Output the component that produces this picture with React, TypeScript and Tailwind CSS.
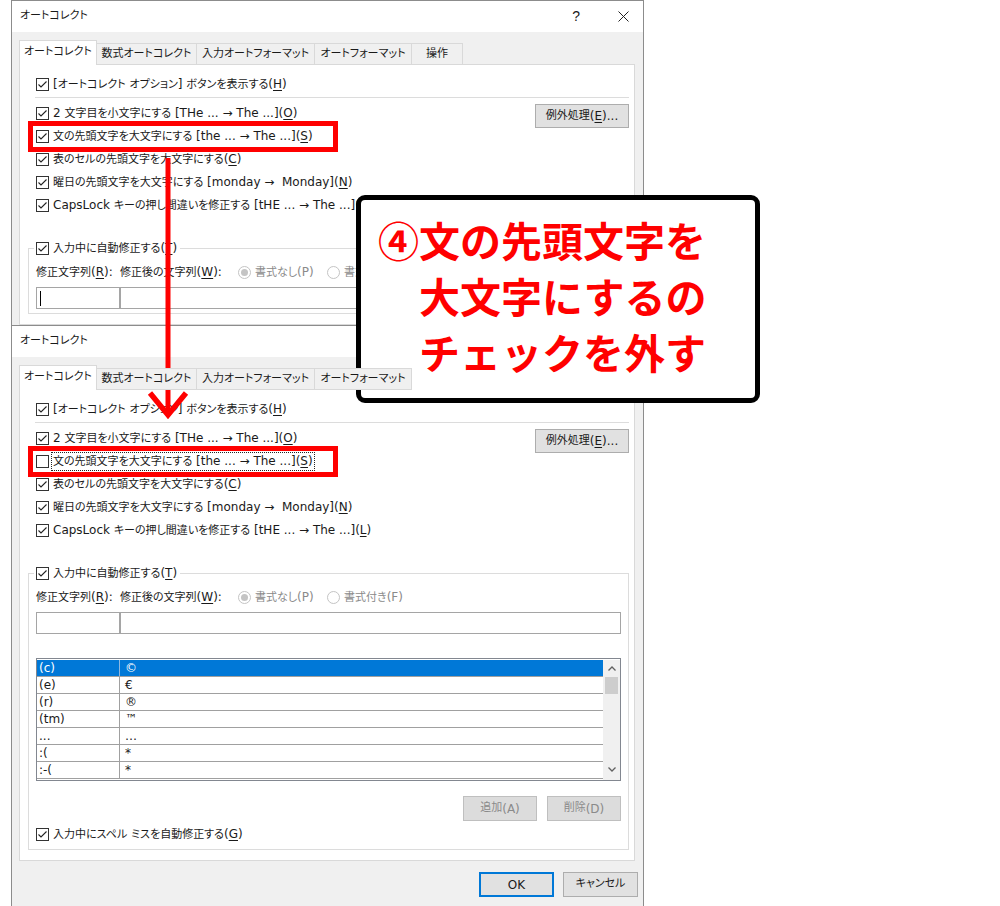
import React from "react";

const ui = "font-['DejaVu_Sans','Noto_Sans_CJK_JP',sans-serif] [font-feature-settings:'palt'] text-[12px] text-[#1a1a1a]";

const tabs = [
  { label: "オートコレクト", w: "w-[78px]" },
  { label: "数式オートコレクト", w: "w-[100px]" },
  { label: "入力オートフォーマット", w: "w-[118px]" },
  { label: "オートフォーマット", w: "w-[97px]" },
  { label: "操作", w: "w-[51px]" },
];

const entries = [
  ["(c)", "©"],
  ["(e)", "€"],
  ["(r)", "®"],
  ["(tm)", "™"],
  ["...", "…"],
  [":(", "*"],
  [":-(", "*"],
];

// Japanese runs get a slightly smaller size than the latin ones (Meiryo UI look);
// "&X" marks an underlined access key.
function Txt({ s }: { s: string }) {
  const parts = s.split(/([\u3000-\u30ff\u4e00-\u9fff\uff00-\uffef]+)/);
  return (
    <>
      {parts.map((p, i) => {
        if (!p) return null;
        if (i % 2 === 1)
          return (
            <span key={i} className="text-[11px]">
              {p}
            </span>
          );
        const segs = p.split(/&(.)/);
        return (
          <React.Fragment key={i}>
            {segs.map((q, j) =>
              j % 2 ? (
                <span key={j} className="underline underline-offset-2">
                  {q}
                </span>
              ) : (
                q
              )
            )}
          </React.Fragment>
        );
      })}
    </>
  );
}

function Check({ on }: { on: boolean }) {
  return (
    <span className="flex h-[13px] w-[13px] shrink-0 items-center justify-center border border-[#333] bg-white">
      {on && (
        <svg width="11" height="11" viewBox="0 0 11 11">
          <path d="M1.5 5.5L4 8l5.5-5.5" fill="none" stroke="#222" strokeWidth="1.1" />
        </svg>
      )}
    </span>
  );
}

function Row({ on, focus, s }: { on: boolean; focus?: boolean; s: string }) {
  return (
    <div className="flex h-[23px] items-center gap-[3px]">
      <Check on={on} />
      <span
        className={
          focus
            ? "whitespace-nowrap px-px leading-[16px] outline-1 outline-dotted outline-[#222]"
            : "whitespace-nowrap px-px leading-[16px]"
        }
      >
        <Txt s={s} />
      </span>
    </div>
  );
}

function Btn({ className, children }: { className: string; children: React.ReactNode }) {
  return <div className={`flex items-center justify-center ${className}`}>{children}</div>;
}

function Radio({ on, s, className }: { on?: boolean; s: string; className?: string }) {
  return (
    <div className={`flex items-center gap-[4px] text-[#8a8a8a] ${className ?? ""}`}>
      <span className="flex h-[13px] w-[13px] items-center justify-center rounded-full border border-[#c4c4c4] bg-white">
        {on && <span className="h-[7px] w-[7px] rounded-full bg-[#c4c4c4]" />}
      </span>
      <span className="whitespace-nowrap">
        <Txt s={s} />
      </span>
    </div>
  );
}

function Panel({ second }: { second?: boolean }) {
  return (
    <div className="border border-[#d9d9d9] bg-white pt-[8px] pb-[10px]">
      <div className="pl-[16px]">
        <Row on s="[オートコレクト オプション] ボタンを表示する(&H)" />
      </div>
      <div className="mt-px ml-[15px] mr-[5px] h-px bg-[#dcdcdc]" />
      <div className="mt-[4px] flex pl-[16px] pr-[5px]">
        <div className="flex-1">
          <Row on s="2 文字目を小文字にする [THe ... → The ...](&O)" />
          <Row on={!second} focus={second} s="文の先頭文字を大文字にする [the ... → The ...](&S)" />
          <Row on s="表のセルの先頭文字を大文字にする(&C)" />
          <Row on s={"曜日の先頭文字を大文字にする [monday →\u00a0 Monday](&N)"} />
          <Row on s="CapsLock キーの押し間違いを修正する [tHE ... → The ...](&L)" />
        </div>
        <Btn className="mt-[2px] h-[24px] w-[94px] border border-[#adadad] bg-[#e1e1e1]">
          <Txt s="例外処理(&E)..." />
        </Btn>
      </div>

      <fieldset className="mt-[23px] ml-[8px] mr-[5px] border border-[#dcdcdc] px-[7px] pb-[4px]">
        <legend className="-ml-[2px] px-[2px]">
          <div className="flex h-[16px] items-center gap-[3px]">
            <Check on />
            <span className="px-px">
              <Txt s="入力中に自動修正する(&T)" />
            </span>
          </div>
        </legend>
        <div className="mt-[7px] flex h-[18px] items-center whitespace-nowrap">
          <span className="w-[84px]">
            <Txt s="修正文字列(&R):" />
          </span>
          <span className="w-[118px]">
            <Txt s="修正後の文字列(&W):" />
          </span>
          <Radio on className="w-[89px]" s="書式なし(P)" />
          <Radio s="書式付き(F)" />
        </div>
        <div className="mt-[6px] flex h-[22px]">
          <div className="flex w-[84px] items-center border border-[#a5a5a5] pl-[3px]">
            {!second && <span className="h-[15px] w-px bg-black" />}
          </div>
          <div className="flex-1 border border-[#a5a5a5]" />
        </div>

        {second && (
          <>
            <div className="mt-[24px] flex h-[123px] border border-[#828790] pt-px">
              <div className="flex-1">
                {entries.map(([a, b], i) => (
                  <div
                    key={a}
                    className={`flex h-[17px] border-b border-[#a0a0a0] leading-[16px] ${
                      i === 0 ? "bg-[#0078d7] text-white" : ""
                    }`}
                  >
                    <span className={`w-[83px] border-r pl-[2px] ${i === 0 ? "border-[#8fb8e0]" : "border-[#a0a0a0]"}`}>
                      {a}
                    </span>
                    <span className="pl-[5px]">{b}</span>
                  </div>
                ))}
              </div>
              <div className="flex w-[17px] flex-col bg-[#f0f0f0]">
                <div className="flex h-[17px] items-center justify-center">
                  <svg width="8" height="5" viewBox="0 0 8 5">
                    <path d="M0.5 4.5L4 1l3.5 3.5" fill="none" stroke="#606060" strokeWidth="1.3" />
                  </svg>
                </div>
                <div className="mx-[2px] h-[17px] bg-[#cdcdcd]" />
                <div className="mt-auto mb-[2px] flex h-[17px] items-center justify-center">
                  <svg width="8" height="5" viewBox="0 0 8 5">
                    <path d="M0.5 0.5L4 4l3.5-3.5" fill="none" stroke="#606060" strokeWidth="1.3" />
                  </svg>
                </div>
              </div>
            </div>

            <div className="mt-[15px] flex justify-end gap-[10px] text-[#8a8a8a]">
              <Btn className="h-[25px] w-[74px] border border-[#bfbfbf] bg-[#dcdcdc]">
                <Txt s="追加(A)" />
              </Btn>
              <Btn className="h-[25px] w-[74px] border border-[#bfbfbf] bg-[#dcdcdc]">
                <Txt s="削除(D)" />
              </Btn>
            </div>
            <div className="mt-[2px] flex h-[22px] items-center gap-[3px]">
              <Check on />
              <span className="px-px">
                <Txt s="入力中にスペル ミスを自動修正する(&G)" />
              </span>
            </div>
          </>
        )}
      </fieldset>
    </div>
  );
}

function Dialog({ second }: { second?: boolean }) {
  // the lower window's title buttons and last tab sit under the callout
  const shown = second ? tabs.slice(0, 4) : tabs;
  return (
    <div className={`flex w-[633px] flex-col border border-[#8c8c8c] bg-[#f0f0f0] ${ui}`}>
      <div className="flex h-[31px] items-center bg-white pl-[8px] pr-[14px]">
        <Txt s="オートコレクト" />
        {!second && (
          <>
            <span className="ml-auto font-['Liberation_Sans',sans-serif] text-[14px]">?</span>
            <svg className="ml-[38px]" width="11" height="11" viewBox="0 0 11 11">
              <path d="M0.5 0.5l10 10M10.5 0.5l-10 10" stroke="#222" strokeWidth="1" />
            </svg>
          </>
        )}
      </div>
      <div className="pt-[8px] pl-[7px] pr-[8px]">
        <div className="relative z-10 -mb-px flex h-[25px] items-end">
          {shown.map((t, i) =>
            i === 0 ? (
              <div
                key={t.label}
                className={`flex h-[25px] items-center justify-center border border-b-0 border-[#d9d9d9] bg-white pb-[1px] ${t.w}`}
              >
                <Txt s={t.label} />
              </div>
            ) : (
              <div
                key={t.label}
                className={`flex h-[22px] items-center justify-center border border-l-0 border-[#d9d9d9] bg-[#f0f0f0] ${t.w}`}
              >
                <Txt s={t.label} />
              </div>
            )
          )}
        </div>
        <Panel second={second} />
      </div>
      {second && (
        <div className="flex justify-end gap-[9px] pt-[11px] pb-[9px] pr-[5px]">
          <Btn className="h-[25px] w-[75px] border-2 border-[#0078d7] bg-[#e1e1e1]">OK</Btn>
          <Btn className="h-[25px] w-[75px] border border-[#adadad] bg-[#e1e1e1]">
            <Txt s="キャンセル" />
          </Btn>
        </div>
      )}
    </div>
  );
}

export default function App() {
  return (
    <div className="relative h-[906px] w-[1000px] overflow-hidden bg-white">
      <div className="absolute left-[11px] top-0 h-[326px] overflow-hidden">
        <Dialog />
      </div>
      <div className="absolute left-[11px] top-[325px]">
        <Dialog second />
      </div>

      {/* callout */}
      <div className="absolute left-[356px] top-[195px] h-[208px] w-[404px] rounded-[9px] border-[5px] border-black bg-white pt-[11px] pl-[17px] font-['Noto_Sans_CJK_JP',sans-serif] text-[41px] font-bold leading-[56px] text-[#ff0000]">
        <div>④文の先頭文字を</div>
        <div>　大文字にするの</div>
        <div>　チェックを外す</div>
      </div>

      {/* highlight boxes */}
      <div className="absolute left-[28px] top-[121px] h-[31px] w-[310px] border-[5px] border-[#ff0000]" />
      <div className="absolute left-[28px] top-[446px] h-[31px] w-[310px] border-[5px] border-[#ff0000]" />

      {/* arrow */}
      <svg className="absolute left-[140px] top-[150px]" width="60" height="275" viewBox="0 0 60 275">
        <line x1="28" y1="8" x2="28" y2="262" stroke="#ff0000" strokeWidth="5" />
        <polyline points="10,243 28,265 46,243" fill="none" stroke="#ff0000" strokeWidth="5.5" />
      </svg>
    </div>
  );
}
